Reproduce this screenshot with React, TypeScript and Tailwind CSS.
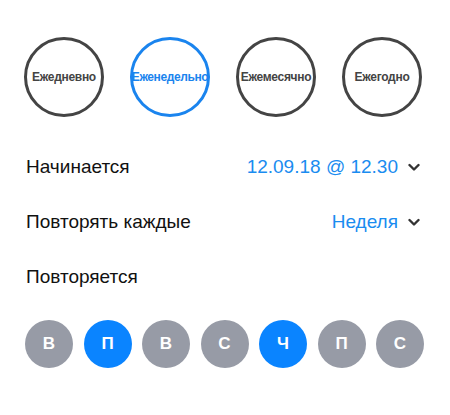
import React, { useState } from "react";

const periods = ["Ежедневно", "Еженедельно", "Ежемесячно", "Ежегодно"];
const days = ["В", "П", "В", "С", "Ч", "П", "С"];

function Chevron() {
  return (
    <svg width="12" height="9" viewBox="0 0 12 9" className="ml-[10px]">
      <polyline
        points="1.5,2 6,6.5 10.5,2"
        fill="none"
        stroke="#333"
        strokeWidth="2.4"
        strokeLinecap="round"
        strokeLinejoin="round"
      />
    </svg>
  );
}

export default function App() {
  const [period, setPeriod] = useState(1);
  const [active, setActive] = useState<number[]>([1, 4]);

  function toggle(i: number) {
    setActive((a) => (a.includes(i) ? a.filter((x) => x !== i) : [...a, i]));
  }

  return (
    <div
      className="w-[450px] h-[415px] bg-white"
      style={{ fontFamily: '"Liberation Sans", Arial, sans-serif' }}
    >
      <div className="flex gap-[26px] pl-6 pt-[37px]">
        {periods.map((p, i) => (
          <button
            key={p}
            type="button"
            onClick={() => setPeriod(i)}
            className={
              i === period
                ? "flex h-20 w-20 items-center justify-center rounded-full border-[3px] border-[#1a84ee] text-[12px] font-bold tracking-[-0.4px] text-[#1a84ee]"
                : "flex h-20 w-20 items-center justify-center rounded-full border-[3px] border-[#444] text-[12px] font-bold tracking-[-0.3px] text-[#444]"
            }
          >
            {p}
          </button>
        ))}
      </div>

      <div className="mt-[23px] pl-[26px] pr-[30px] text-[19px] text-[#111]">
        <div className="flex h-[55px] items-center justify-between">
          <span>Начинается</span>
          <span className="flex items-center text-[#1a8cf0]">
            12.09.18 @ 12.30
            <Chevron />
          </span>
        </div>
        <div className="flex h-[55px] items-center justify-between">
          <span>Повторять каждые</span>
          <span className="flex items-center text-[#1a8cf0]">
            Неделя
            <Chevron />
          </span>
        </div>
        <div className="flex h-[55px] items-center">
          <span>Повторяется</span>
        </div>
      </div>

      <div className="mt-[15px] flex gap-[10.5px] pl-[25px]">
        {days.map((d, i) => (
          <button
            key={i}
            type="button"
            onClick={() => toggle(i)}
            className={
              active.includes(i)
                ? "flex h-12 w-12 items-center justify-center rounded-full bg-[#0a84ff] text-[17px] font-bold text-white"
                : "flex h-12 w-12 items-center justify-center rounded-full bg-[#979ba6] text-[17px] font-bold text-white"
            }
          >
            {d}
          </button>
        ))}
      </div>
    </div>
  );
}
